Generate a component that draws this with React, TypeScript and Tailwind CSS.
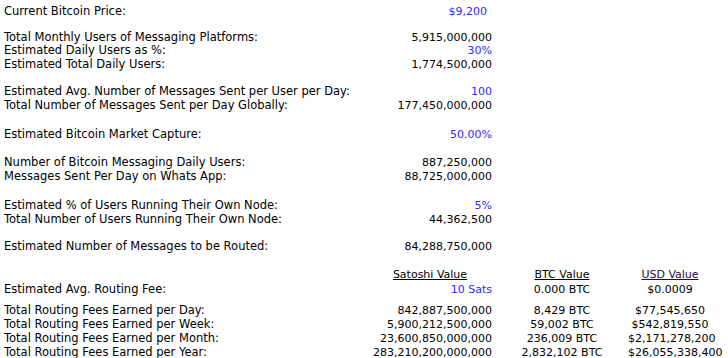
import React from 'react';

type Row = {
  label?: string;
  value?: string;
  blue?: boolean;
  btc?: string;
  usd?: string;
  header?: boolean;
  h: string;
};

const rows: Row[] = [
  { label: 'Current Bitcoin Price:', value: '$9,200', blue: true, h: 'h-[14px]' },
  { h: 'h-[12px]' },
  { label: 'Total Monthly Users of Messaging Platforms:', value: '5,915,000,000', h: 'h-[13px]' },
  { label: 'Estimated Daily Users as %:', value: '30%', blue: true, h: 'h-[14px]' },
  { label: 'Estimated Total Daily Users:', value: '1,774,500,000', h: 'h-[14px]' },
  { h: 'h-[13px]' },
  { label: 'Estimated Avg. Number of Messages Sent per User per Day:', value: '100', blue: true, h: 'h-[14px]' },
  { label: 'Total Number of Messages Sent per Day Globally:', value: '177,450,000,000', h: 'h-[14px]' },
  { h: 'h-[15px]' },
  { label: 'Estimated Bitcoin Market Capture:', value: '50.00%', blue: true, h: 'h-[14px]' },
  { h: 'h-[14px]' },
  { label: 'Number of Bitcoin Messaging Daily Users:', value: '887,250,000', h: 'h-[14px]' },
  { label: 'Messages Sent Per Day on Whats App:', value: '88,725,000,000', h: 'h-[14px]' },
  { h: 'h-[15px]' },
  { label: 'Estimated % of Users Running Their Own Node:', value: '5%', blue: true, h: 'h-[14px]' },
  { label: 'Total Number of Users Running Their Own Node:', value: '44,362,500', h: 'h-[14px]' },
  { h: 'h-[13px]' },
  { label: 'Estimated Number of Messages to be Routed:', value: '84,288,750,000', h: 'h-[14px]' },
  { h: 'h-[15px]' },
  { header: true, h: 'h-[14px]' },
  { label: 'Estimated Avg. Routing Fee:', value: '10 Sats', blue: true, btc: '0.000 BTC', usd: '$0.0009', h: 'h-[14px]' },
  { h: 'h-[7px]' },
  { label: 'Total Routing Fees Earned per Day:', value: '842,887,500,000', btc: '8,429 BTC', usd: '$77,545,650', h: 'h-[14px]' },
  { label: 'Total Routing Fees Earned per Week:', value: '5,900,212,500,000', btc: '59,002 BTC', usd: '$542,819,550', h: 'h-[14px]' },
  { label: 'Total Routing Fees Earned per Month:', value: '23,600,850,000,000', btc: '236,009 BTC', usd: '$2,171,278,200', h: 'h-[14px]' },
  { label: 'Total Routing Fees Earned per Year:', value: '283,210,200,000,000', btc: '2,832,102 BTC', usd: '$26,055,338,400', h: 'h-[14px]' },
];

export default function App() {
  return (
    <div className="w-[728px] h-[358px] overflow-hidden bg-white pt-[4px] text-[11px] leading-[14px] text-black font-['DejaVu_Sans',Verdana,sans-serif]">
      {rows.map((r, i) => (
        <div key={i} className={`flex items-baseline ${r.h}`}>
          <div className="w-[368px] pl-[4px] whitespace-nowrap text-[11.5px] leading-[14px]">{r.label}</div>
          <div className={`w-[128px] pr-[4px] whitespace-nowrap ${r.header ? 'text-center' : 'text-right'} ${r.blue ? 'text-[#2a2aff]' : ''}`}>
            {r.header ? <span className="underline">Satoshi Value</span> : r.value === '$9,200' ? <span className="pr-[5px]">{r.value}</span> : r.value}
          </div>
          <div className="w-[132px] text-center whitespace-nowrap">
            {r.header ? <span className="underline">BTC Value</span> : r.btc}
          </div>
          <div className="w-[84px] text-center whitespace-nowrap">
            {r.header ? <span className="underline text-[#2a0a3a]">USD Value</span> : r.usd}
          </div>
        </div>
      ))}
    </div>
  );
}
